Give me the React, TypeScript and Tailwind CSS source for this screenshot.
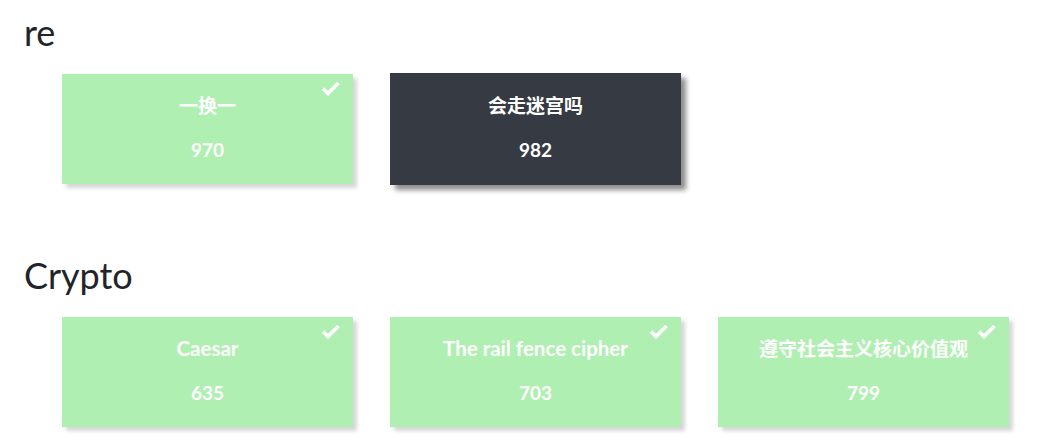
import React from 'react';

interface Challenge {
    name: string;
    score: number;
    solved: boolean;
}

interface Category {
    title: string;
    challenges: Challenge[];
}

const categories: Category[] = [
    {
        title: 're',
        challenges: [
            { name: '一换一', score: 970, solved: true },
            { name: '会走迷宫吗', score: 982, solved: false },
        ],
    },
    {
        title: 'Crypto',
        challenges: [
            { name: 'Caesar', score: 635, solved: true },
            { name: 'The rail fence cipher', score: 703, solved: true },
            { name: '遵守社会主义核心价值观', score: 799, solved: true },
        ],
    },
];

const hasCjk = (s: string) => /[\u4e00-\u9fff]/.test(s);

const CheckMark = () => (
    <svg width="19" height="14" viewBox="0 0 19 14" className="absolute top-[8px] right-[13px]">
        <path d="M2 6.5 L7 11.5 L17.5 1" fill="none" stroke="#ffffff" strokeWidth="3.6" />
    </svg>
);

const ChallengeCard: React.FC<{ challenge: Challenge }> = ({ challenge }) => {
    const { name, score, solved } = challenge;
    return (
        <div
            className={`relative w-[291px] flex flex-col items-center text-white font-bold text-[19px] leading-[23px] ${solved
                    ? 'bg-[#b0efb2] pt-5 pb-[23px] shadow-[4px_4px_4px_rgba(0,0,0,0.16)]'
                    : 'bg-[#363a42] pt-[21px] pb-[24px] -my-px shadow-[5px_5px_5px_rgba(0,0,0,0.45)]'
                }`}
        >
            {solved && <CheckMark />}
            <div className={hasCjk(name) ? 'text-[19px]' : 'text-[20.5px]'}>{name}</div>
            <div className="mt-[21px]">{score}</div>
        </div>
    );
};

export default function App() {
    return (
        <div
            className="w-[1040px] min-h-[442px] bg-white pt-[11px] pl-6"
            style={{ fontFamily: 'Lato, "Noto Sans CJK SC", sans-serif' }}
        >
            {categories.map((cat, i) => (
                <section key={cat.title} className={i > 0 ? 'mt-[70px]' : ''}>
                    <h2 className="text-[36px] leading-[1.2] font-normal text-[#212529]">{cat.title}</h2>
                    <div className="mt-5 ml-[38px] flex items-start gap-[37px]">
                        {cat.challenges.map(ch => (
                            <ChallengeCard key={ch.name} challenge={ch} />
                        ))}
                    </div>
                </section>
            ))}
        </div>
    );
}
